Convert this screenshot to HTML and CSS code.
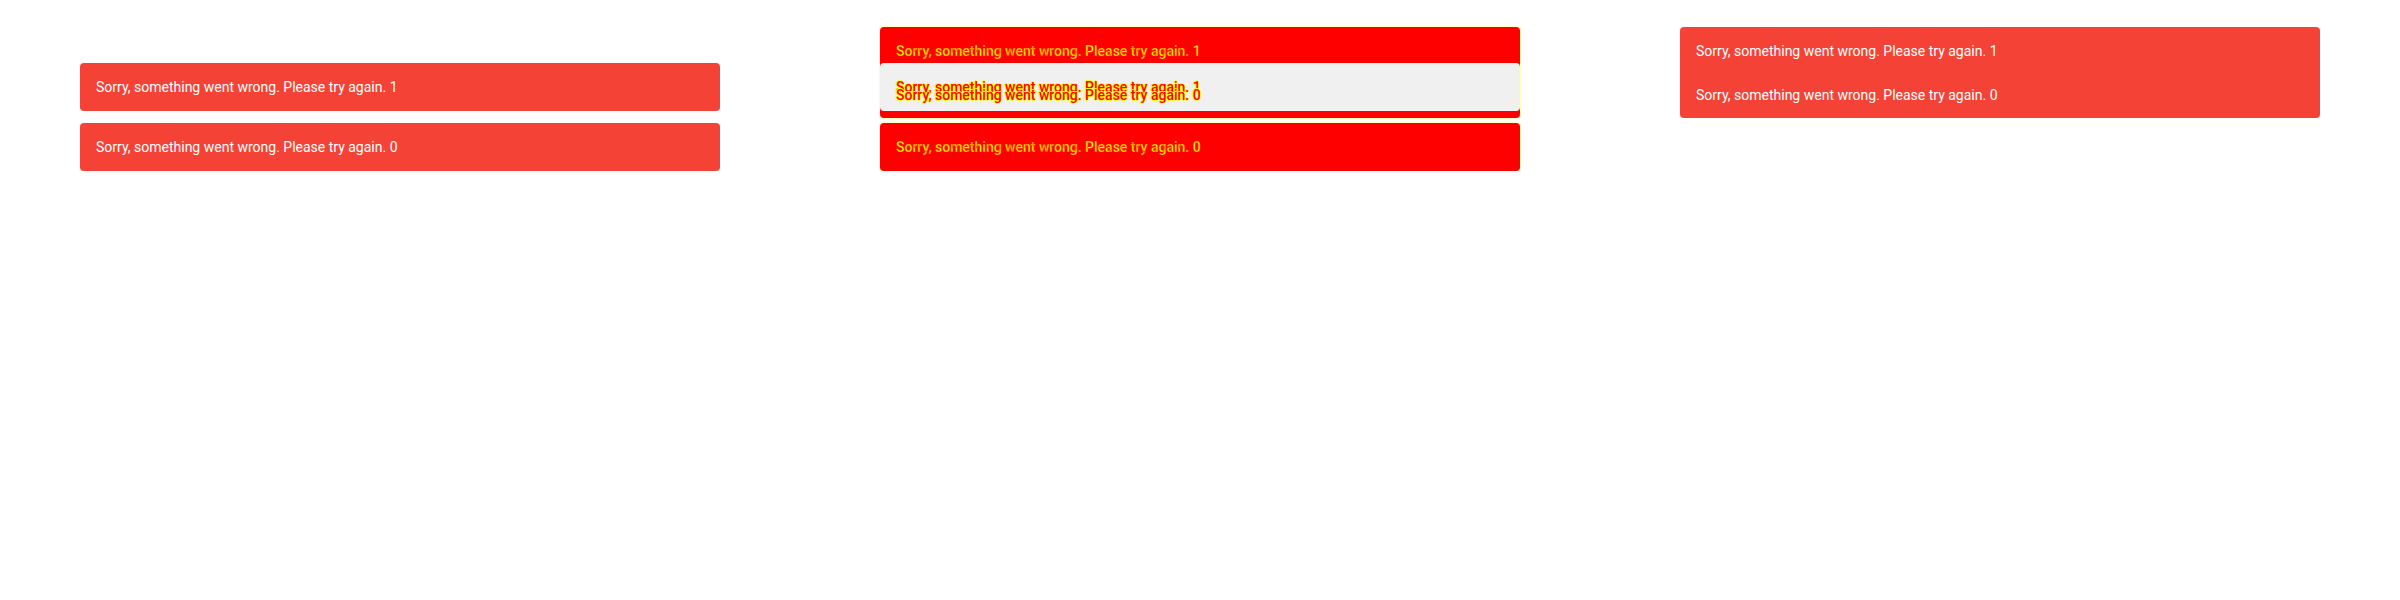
FILE: index.html
```html
<!DOCTYPE html>
<html>
<head>
<meta charset="utf-8">
<link rel="stylesheet" href="styles.css">
</head>
<body>
<div class="row">
  <section class="panel panel-a">
    <div class="snack">Sorry, something went wrong. Please try again. 1</div>
    <div class="snack">Sorry, something went wrong. Please try again. 0</div>
  </section>
  <section class="panel panel-diff">
    <div class="diff-top">
      <div class="diff-line">Sorry, something went wrong. Please try again. 1</div>
      <div class="diff-same">
        <div class="diff-line">Sorry, something went wrong. Please try again. 1</div>
        <div class="diff-line lower">Sorry, something went wrong. Please try again. 0</div>
      </div>
    </div>
    <div class="diff-box">
      <div class="diff-line">Sorry, something went wrong. Please try again. 0</div>
    </div>
  </section>
  <section class="panel panel-b">
    <div class="snack-group">
      <div class="line">Sorry, something went wrong. Please try again. 1</div>
      <div class="line">Sorry, something went wrong. Please try again. 0</div>
    </div>
  </section>
</div>
</body>
</html>
```
FILE: styles.css
```css
html, body {
  margin: 0;
  padding: 0;
  background: #ffffff;
  font-family: Roboto, "Liberation Sans", sans-serif;
  font-size: 14px;
}
.row {
  display: flex;
  width: 2400px;
}
.panel {
  width: 800px;
  box-sizing: border-box;
  padding: 0 80px;
  display: flex;
  flex-direction: column;
}
.panel-a {
  padding-top: 63px;
  gap: 12px;
}
.snack {
  background: #f44336;
  color: #ffffff;
  border-radius: 4px;
  height: 48px;
  box-sizing: border-box;
  padding: 14px 16px;
  line-height: 20px;
}
.panel-b {
  padding-top: 27px;
}
.snack-group {
  background: #f44336;
  color: #ffffff;
  border-radius: 4px;
  padding: 14px 16px 13px;
  display: flex;
  flex-direction: column;
  gap: 24px;
  line-height: 20px;
}
.panel-diff {
  padding-top: 27px;
  gap: 5px;
}
.diff-line {
  line-height: 20px;
  color: #ffff00;
  font-weight: 500;
  -webkit-text-stroke: 0.3px #ff0000;
}
.diff-top {
  background: #ff0000;
  border-radius: 4px;
  padding-top: 14px;
  padding-bottom: 7px;
  box-shadow: 0 0 0 1px rgba(255, 255, 0, 0.25);
}
.diff-top > .diff-line {
  padding: 0 16px;
  margin-bottom: 2px;
}
.diff-same {
  background: #f0f0f0;
  border-radius: 4px;
  height: 48px;
  box-sizing: border-box;
  padding: 14px 16px;
  display: grid;
}
.diff-same .diff-line {
  grid-area: 1 / 1;
  color: #ff0000;
  -webkit-text-stroke: 0;
  text-shadow: 1px 0 0 #ffff00, -1px 0 0 #ffff00, 0 1px 0 #ffff00, 0 -1px 0 #ffff00;
}
.diff-same .lower {
  margin-top: 8px;
}
.diff-box {
  background: #ff0000;
  border-radius: 4px;
  height: 48px;
  box-sizing: border-box;
  padding: 14px 16px;
  box-shadow: 0 0 0 1px rgba(255, 255, 0, 0.25);
}
```
